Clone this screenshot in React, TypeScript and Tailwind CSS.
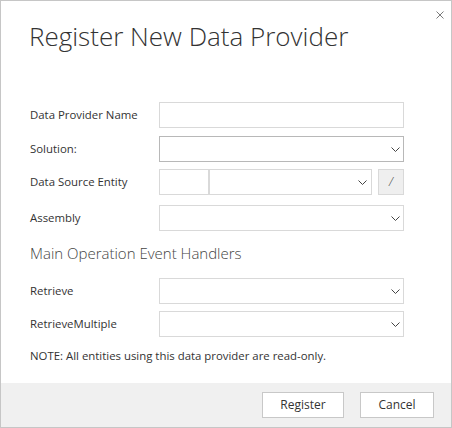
import React from "react";

const Chevron = () => (
  <svg width="9" height="5" viewBox="0 0 9 5" className="block">
    <polyline points="0.5,0.5 4.5,4.5 8.5,0.5" fill="none" stroke="#444" strokeWidth="1" />
  </svg>
);

const Select = ({ dark = false, w = "w-[245px]" }: { dark?: boolean; w?: string }) => (
  <div
    className={`${w} h-[26px] border ${dark ? "border-[#b8b8b8]" : "border-[#d9d9d9]"} bg-white flex items-center justify-end pr-[3px]`}
  >
    <Chevron />
  </div>
);

const Row = ({ label, children, mt }: { label: string; children: React.ReactNode; mt: string }) => (
  <div className={`flex items-center h-[26px] ${mt}`}>
    <div className="w-[129px] text-[11.4px] text-[#333]">{label}</div>
    {children}
  </div>
);

export default function App() {
  return (
    <div
      className="relative w-[452px] h-[428px] border border-[#c6c6c6] bg-white flex flex-col"
      style={{ fontFamily: '"Open Sans", "Noto Sans", sans-serif' }}
    >
      <button className="absolute top-[9px] left-[434px] w-[10px] h-[10px] flex items-center justify-center">
        <svg width="8" height="8" viewBox="0 0 8 8" className="block">
          <path d="M0.5 0.5 L7.5 7.5 M7.5 0.5 L0.5 7.5" stroke="#7a7a7a" strokeWidth="1" fill="none" />
        </svg>
      </button>
      <div className="flex-1 flex flex-col pl-[29px]">
        <div className="mt-[19px] h-[32px] leading-[32px] text-[26px] font-light text-[#333] -ml-[1px]">
          Register New Data Provider
        </div>
        <Row label="Data Provider Name" mt="mt-[50px]">
          <div className="w-[245px] h-[26px] border border-[#d9d9d9] bg-white" />
        </Row>
        <Row label="Solution:" mt="mt-[8px]">
          <Select dark />
        </Row>
        <Row label="Data Source Entity" mt="mt-[7px]">
          <div className="w-[50px] h-[26px] border border-[#d9d9d9] bg-white" />
          <div className="w-[163px] h-[26px] border border-[#d9d9d9] bg-white flex items-center justify-end pr-[4px]">
            <Chevron />
          </div>
          <div className="ml-[6px] w-[26px] h-[26px] border border-[#d9d9d9] bg-[#efefef] flex items-center justify-center text-[12px] font-light text-[#444] italic">
            /
          </div>
        </Row>
        <Row label="Assembly" mt="mt-[10px]">
          <Select />
        </Row>
        <div className="mt-[9px] h-[26px] leading-[26px] text-[15px] font-light text-[#444]">
          Main Operation Event Handlers
        </div>
        <Row label="Retrieve" mt="mt-[12px]">
          <Select />
        </Row>
        <Row label="RetrieveMultiple" mt="mt-[7px]">
          <Select />
        </Row>
        <div className="mt-[9px] h-[20px] leading-[20px] text-[11.4px] text-[#333]">
          NOTE: All entities using this data provider are read-only.
        </div>
      </div>
      <div className="h-[44px] bg-[#f0f0f0] flex items-center justify-end pr-[17px] gap-[16px]">
        <button className="w-[82px] h-[26px] border border-[#c8c8c8] bg-white text-[12px] text-[#333]">
          Register
        </button>
        <button className="w-[74px] h-[26px] border border-[#c8c8c8] bg-white text-[12px] text-[#333]">
          Cancel
        </button>
      </div>
    </div>
  );
}
